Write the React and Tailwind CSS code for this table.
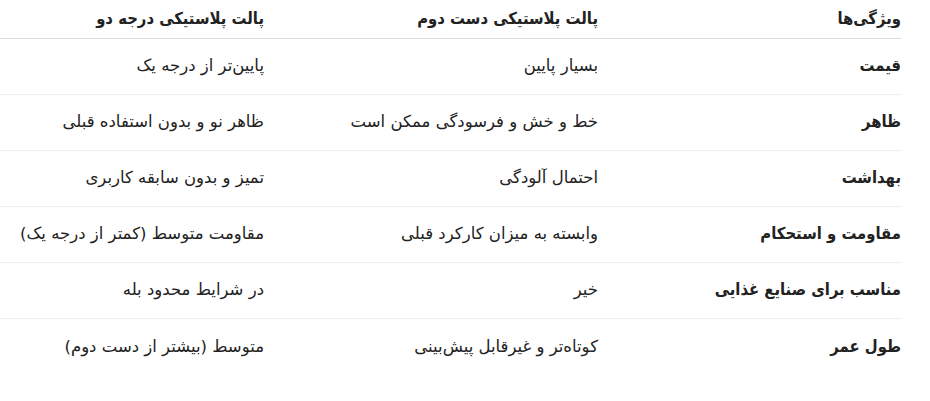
const rows = [
  ['قیمت', 'بسیار پایین', 'پایین‌تر از درجه یک'],
  ['ظاهر', 'خط و خش و فرسودگی ممکن است', 'ظاهر نو و بدون استفاده قبلی'],
  ['بهداشت', 'احتمال آلودگی', 'تمیز و بدون سابقه کاربری'],
  ['مقاومت و استحکام', 'وابسته به میزان کارکرد قبلی', 'مقاومت متوسط (کمتر از درجه یک)'],
  ['مناسب برای صنایع غذایی', 'خیر', 'در شرایط محدود بله'],
  ['طول عمر', 'کوتاه‌تر و غیرقابل پیش‌بینی', 'متوسط (بیشتر از دست دوم)'],
];

export default function App() {
  return (
    <div className="min-h-[401px] bg-white font-['DejaVu_Sans',sans-serif] text-[#222]" dir="rtl">
      <div className="ml-0 mr-auto w-[901px]">
        <div className="grid h-[39px] grid-cols-[303px_334px_264px] items-center border-b border-[#dcdcdc] font-['DejaVu_Sans_Condensed',sans-serif] text-[16.5px] font-bold">
          <div>ویژگی‌ها</div>
          <div>پالت پلاستیکی دست دوم</div>
          <div>پالت پلاستیکی درجه دو</div>
        </div>
        {rows.map((r, i) => (
          <div
            key={i}
            className={
              i < rows.length - 1
                ? 'grid h-[56px] grid-cols-[303px_334px_264px] items-center border-b border-[#eeeeee] text-[16.5px]'
                : 'grid h-[56px] grid-cols-[303px_334px_264px] items-center text-[16.5px]'
            }
          >
            <div className="font-['DejaVu_Sans_Condensed',sans-serif] font-bold">{r[0]}</div>
            <div>{r[1]}</div>
            <div>{r[2]}</div>
          </div>
        ))}
      </div>
    </div>
  );
}
